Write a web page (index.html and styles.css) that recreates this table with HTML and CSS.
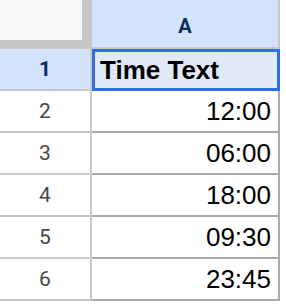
FILE: index.html
```html
<!DOCTYPE html>
<html>
<head>
<meta charset="utf-8">
<link rel="stylesheet" href="styles.css">
</head>
<body>
<div class="sheet">
  <div class="corner"><div class="corner-box"></div></div>
  <div class="col-head">A</div>

  <div class="row-head sel">1</div>
  <div class="cell active">Time Text</div>

  <div class="row-head">2</div>
  <div class="cell num">12:00</div>

  <div class="row-head">3</div>
  <div class="cell num">06:00</div>

  <div class="row-head">4</div>
  <div class="cell num">18:00</div>

  <div class="row-head">5</div>
  <div class="cell num">09:30</div>

  <div class="row-head">6</div>
  <div class="cell num">23:45</div>
</div>
</body>
</html>
```

FILE: styles.css
```css
html, body {
  margin: 0;
  padding: 0;
  background: #ffffff;
}

.sheet {
  display: grid;
  grid-template-columns: 92px 188px;
  grid-template-rows: 49px repeat(6, 42px);
  font-family: "Liberation Sans", Arial, sans-serif;
}

.corner {
  background: #c7c7c7;
}

.corner-box {
  width: 82px;
  height: 40px;
  background: #f8f9fa;
}

.col-head {
  box-sizing: border-box;
  background: #d3e3fd;
  border-right: 2px solid #c7c7c7;
  border-bottom: 2px solid #c7c7c7;
  display: flex;
  align-items: center;
  justify-content: center;
  padding-top: 4px;
  font-family: Roboto, "Liberation Sans", sans-serif;
  font-weight: bold;
  font-size: 20px;
  color: #0b2e5e;
}

.row-head {
  box-sizing: border-box;
  border-right: 2px solid #c7c7c7;
  border-bottom: 2px solid #c7c7c7;
  display: flex;
  align-items: center;
  justify-content: center;
  font-family: Roboto, "Liberation Sans", sans-serif;
  font-size: 21px;
  color: #444746;
}

.row-head.sel {
  background: #d3e3fd;
  font-weight: bold;
  color: #0b2e5e;
}

.cell {
  box-sizing: border-box;
  border-right: 2px solid #ababab;
  border-bottom: 2px solid #ababab;
  display: flex;
  align-items: center;
  font-size: 26px;
  color: #000000;
}

.cell.num {
  justify-content: flex-end;
  padding-right: 7px;
}

.cell.active {
  background: #e1e9f7;
  border: 3px solid #2f6fe4;
  padding-left: 5px;
  font-weight: bold;
  font-size: 26px;
}
```
